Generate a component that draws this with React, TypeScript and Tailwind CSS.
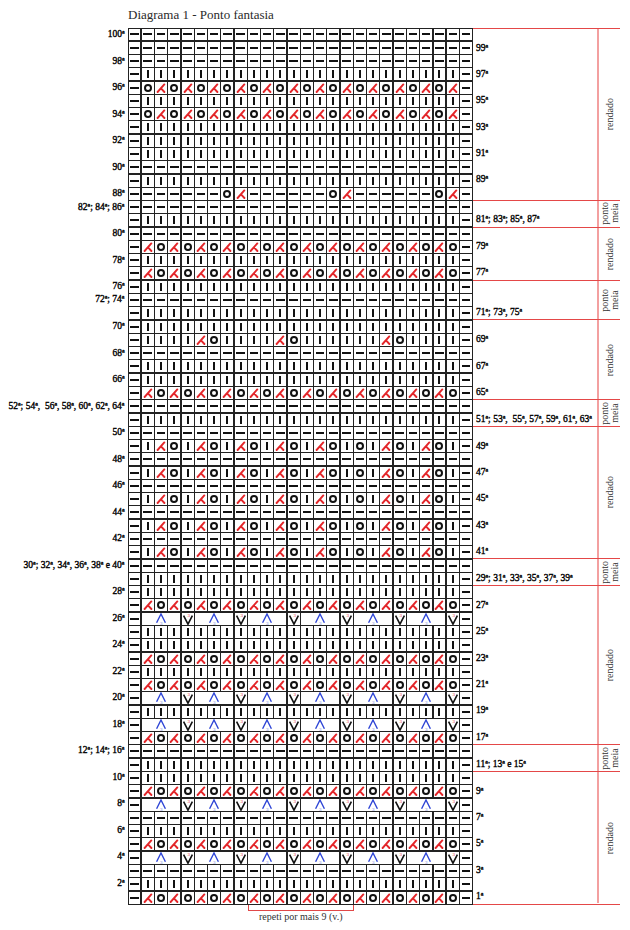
import React from "react";

const rep = (s: string, n: number) => s.repeat(n);

// chart row patterns, 26 stitches wide (A = 3 merged cells)
const P: Record<string, string> = {
  D: rep("D", 26),
  K: "D" + rep("K", 24) + "D",
  OX: "D" + rep("OX", 12) + "D",
  XO: "D" + rep("XO", 12) + "D",
  R88: "DDDDDDDOXDDDDDDOXDDDDDDOXD",
  R69: "DKKKKXOKKKKXOKKKKKKXOKKKKD",
  KXO: "D" + rep("KXO", 5) + "KO" + rep("KXO", 2) + "KD",
  AV: "D" + rep("AV", 6) + "D",
};

const ROWS = [
  "D", "D", "D", "K", "OX", "K", "OX", "K", "K", "K", "D", "K", "R88",
  "D", "K",
  "D", "XO", "K", "XO",
  "K", "D", "K",
  "K", "R69", "D", "K", "K", "XO",
  "D", "K",
  "D", "KXO", "D", "KXO", "D", "KXO", "D", "KXO", "D", "KXO",
  "D", "K",
  "K", "XO", "AV", "K", "K", "XO", "K", "XO", "AV", "K", "AV", "XO",
  "D", "K",
  "K", "XO", "AV", "D", "K", "XO", "AV", "D", "K", "XO",
];

const LEFT: Record<number, string> = {
  1: "100ª", 3: "98ª", 5: "96ª", 7: "94ª", 9: "92ª", 11: "90ª", 13: "88ª",
  14: "82ª; 84ª; 86ª", 16: "80ª", 18: "78ª", 20: "76ª", 21: "72ª; 74ª",
  23: "70ª", 25: "68ª", 27: "66ª", 29: "52ª; 54ª,  56ª, 58ª, 60ª, 62ª, 64ª",
  31: "50ª", 33: "48ª", 35: "46ª", 37: "44ª", 39: "42ª",
  41: "30ª; 32ª, 34ª, 36ª, 38ª e 40ª", 43: "28ª", 45: "26ª", 47: "24ª",
  49: "22ª", 51: "20ª", 53: "18ª", 55: "12ª; 14ª; 16ª", 57: "10ª", 59: "8ª",
  61: "6ª", 63: "4ª", 65: "2ª",
};

const RIGHT: Record<number, string> = {
  2: "99ª", 4: "97ª", 6: "95ª", 8: "93ª", 10: "91ª", 12: "89ª",
  15: "81ª; 83ª; 85ª, 87ª", 17: "79ª", 19: "77ª", 22: "71ª; 73ª, 75ª",
  24: "69ª", 26: "67ª", 28: "65ª", 30: "51ª; 53ª,  55ª, 57ª, 59ª, 61ª, 63ª",
  32: "49ª", 34: "47ª", 36: "45ª", 38: "43ª", 40: "41ª",
  42: "29ª; 31ª, 33ª, 35ª, 37ª, 39ª", 44: "27ª", 46: "25ª", 48: "23ª",
  50: "21ª", 52: "19ª", 54: "17ª", 56: "11ª; 13ª e 15ª", 58: "9ª", 60: "7ª",
  62: "5ª", 64: "3ª", 66: "1ª",
};

const SECTIONS: { rows: number; label: string }[] = [
  { rows: 13, label: "rendado" },
  { rows: 2, label: "ponto\nmeia" },
  { rows: 4, label: "rendado" },
  { rows: 3, label: "ponto\nmeia" },
  { rows: 6, label: "rendado" },
  { rows: 2, label: "ponto\nmeia" },
  { rows: 10, label: "rendado" },
  { rows: 2, label: "ponto\nmeia" },
  { rows: 12, label: "rendado" },
  { rows: 2, label: "ponto\nmeia" },
  { rows: 10, label: "rendado" },
];

const SPAN: Record<number, string> = {
  2: "row-span-2",
  3: "row-span-3",
  4: "row-span-4",
  6: "row-span-6",
  10: "row-span-10",
  12: "row-span-12",
  13: "row-span-13",
};

const Sym = ({ c }: { c: string }) => {
  switch (c) {
    case "D":
      return <span className="block w-[8.5px] h-[2px] bg-[#111]" />;
    case "K":
      return <span className="block w-[2px] h-[8px] bg-[#111]" />;
    case "O":
      return (
        <span className="block w-[8px] h-[8px] rounded-full border-2 border-[#111]" />
      );
    case "X":
      return (
        <svg width="10" height="10" viewBox="0 0 10 10">
          <path
            d="M1.6 9 L8.3 1.4 M5 5.3 L8.4 9"
            stroke="#e3262a"
            strokeWidth="1.9"
            fill="none"
            strokeLinecap="round"
          />
        </svg>
      );
    case "A":
      return (
        <svg width="12" height="12" viewBox="0 0 12 12">
          <path
            d="M1.6 9.8 L6 1 L10.4 9.8"
            stroke="#3047d6"
            strokeWidth="1.4"
            fill="none"
          />
          <text x="5.1" y="11.6" fontSize="5" fill="#6a7be0" fontFamily="Liberation Serif, serif">
            3
          </text>
        </svg>
      );
    case "V":
      return (
        <svg width="12" height="12" viewBox="0 0 12 12">
          <path
            d="M1.6 2.6 L6 11.2 L10.4 2.6"
            stroke="#111"
            strokeWidth="1.6"
            fill="none"
          />
          <text x="5.6" y="4.4" fontSize="5" fill="#e3262a" fontFamily="Liberation Serif, serif">
            3
          </text>
        </svg>
      );
    default:
      return null;
  }
};

const ChartRow = ({ pattern, r }: { pattern: string; r: number }) => (
  <>
    {pattern.split("").map((c, i) => (
      <div
        key={`${r}-${i}`}
        className={
          c === "A"
            ? "col-span-3 bg-white flex items-center justify-center"
            : "bg-white flex items-center justify-center"
        }
      >
        <Sym c={c} />
      </div>
    ))}
  </>
);

export default function App() {
  let rowStart = 0;
  return (
    <div className="w-[630px] h-[930px] bg-white font-['Liberation_Serif',serif] text-[#1e1e1e]">
      <div className="h-[27.5px] pl-[128px] pt-[7px] text-[13px] leading-[15px] text-[#2a2a2a]">
        Diagrama 1 - Ponto fantasia
      </div>

      <div className="flex">
        {/* even rows, left */}
        <div className="w-[127.5px] h-[877px] grid grid-rows-66 gap-[1.3px] py-[1.5px] pr-[3px]">
          {ROWS.map((_, i) => (
            <div
              key={i}
              className="flex items-center justify-end whitespace-pre font-['Liberation_Serif',serif] text-[9.5px] leading-none text-black [-webkit-text-stroke:0.35px_#000]"
            >
              {LEFT[i + 1] ?? ""}
            </div>
          ))}
        </div>

        {/* chart */}
        <div className="w-[345.5px] h-[877px] grid grid-cols-26 grid-rows-66 gap-[1.3px] bg-[#222] border-[1.5px] border-[#222]">
          {ROWS.map((key, r) => (
            <ChartRow key={r} r={r} pattern={P[key]} />
          ))}
        </div>

        {/* odd rows, right, with sections */}
        <div className="w-[147px] h-[877px] grid grid-rows-66 border-b border-[#e44848]">
          {SECTIONS.map((s, si) => {
            const first = rowStart;
            rowStart += s.rows;
            return (
              <div key={si} className={`${SPAN[s.rows]} flex border-t border-[#e44848]`}>
                <div className="w-[124px] flex flex-col">
                  {Array.from({ length: s.rows }).map((_, k) => (
                    <div
                      key={k}
                      className="flex-1 flex items-center pl-[3px] whitespace-pre font-['Liberation_Serif',serif] text-[9.5px] leading-none text-black [-webkit-text-stroke:0.35px_#000]"
                    >
                      {RIGHT[first + k + 1] ?? ""}
                    </div>
                  ))}
                </div>
                <div className="w-[23px] border-l-2 border-[#f3a0a0] flex items-center justify-center">
                  <span className="[writing-mode:vertical-rl] rotate-180 whitespace-pre text-[10px] leading-[10px] text-center text-[#333]">
                    {s.label}
                  </span>
                </div>
              </div>
            );
          })}
        </div>
      </div>

      <div className="ml-[247.5px] w-[106.5px]">
        <div className="h-[6px] border-x border-b border-[#e04848]" />
        <div className="text-[10px] leading-[12px] text-center whitespace-nowrap text-[#333]">
          repeti por mais 9 (v.)
        </div>
      </div>
    </div>
  );
}
